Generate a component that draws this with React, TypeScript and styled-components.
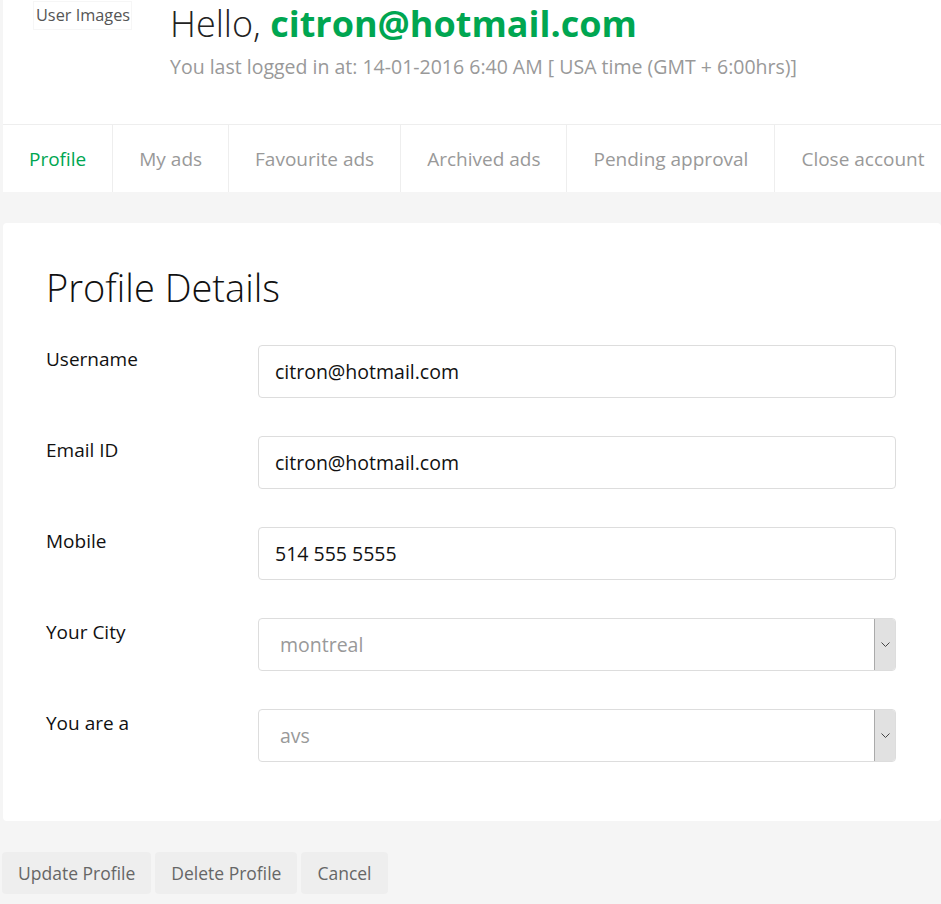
import React from 'react';
import styled, { createGlobalStyle } from 'styled-components';

const GlobalStyle = createGlobalStyle`
  html, body {
    margin: 0;
    padding: 0;
    background: #f5f5f5;
    font-family: 'Open Sans', 'Noto Sans', sans-serif;
  }
`;

const Page = styled.div`
  padding-left: 3px;
  width: 938px;
`;

const HeaderCard = styled.div`
  background: #fff;
`;

const Intro = styled.div`
  display: flex;
  height: 124px;
`;

const UserImages = styled.div`
  width: 167px;
  padding-left: 30px;
  box-sizing: border-box;
  span {
    display: inline-block;
    margin-top: 1px;
    padding: 2px 1px 3px 2px;
    border: 1px solid #f6f6f6;
    font-size: 16.3px;
    color: #555;
  }
`;

const Greeting = styled.div`
  padding-top: 2px;
`;

const Hello = styled.h1`
  margin: 0;
  font-size: 36px;
  font-weight: 300;
  color: #222;
  line-height: 44px;
  b {
    color: #00a651;
    font-weight: 700;
  }
`;

const LastLogin = styled.div`
  margin-top: 7px;
  font-size: 19.5px;
  color: #999;
`;

const Tabs = styled.div`
  display: flex;
  height: 67px;
  border-top: 1px solid #eee;
`;

const Tab = styled.div<{ $active?: boolean }>`
  display: flex;
  align-items: center;
  padding: 0 26px;
  font-size: 19px;
  color: ${(p) => (p.$active ? '#00a651' : '#999')};
  border-left: ${(p) => (p.$active ? 'none' : '1px solid #eee')};
  white-space: nowrap;
`;

const ProfileCard = styled.div`
  margin-top: 31px;
  background: #fff;
  border-radius: 4px;
  padding: 40px 45px 59px 43px;
`;

const Title = styled.h2`
  margin: 0 0 34px;
  font-size: 38px;
  font-weight: 300;
  color: #111;
  line-height: 48px;
`;

const Row = styled.div`
  display: flex;
  margin-bottom: 38px;
  &:last-child {
    margin-bottom: 0;
  }
`;

const Label = styled.label`
  width: 212px;
  padding-top: 1px;
  font-size: 19px;
  font-weight: 500;
  color: #111;
`;

const Field = styled.div<{ $muted?: boolean }>`
  flex: 1;
  height: 53px;
  box-sizing: border-box;
  border: 1px solid #ddd;
  border-radius: 4px;
  display: flex;
  align-items: center;
  padding-left: ${(p) => (p.$muted ? '21px' : '16px')};
  font-size: 19.5px;
  color: ${(p) => (p.$muted ? '#999' : '#111')};
  overflow: hidden;
`;

const Arrow = styled.div`
  margin-left: auto;
  align-self: stretch;
  width: 20px;
  background: #e1e1e1;
  border-left: 1px solid #aaa;
  display: flex;
  align-items: center;
  justify-content: center;
`;

const Actions = styled.div`
  display: flex;
  gap: 4px;
  margin-top: 31px;
  margin-left: -1px;
`;

const Button = styled.button`
  height: 42px;
  padding: 0 16px;
  border: none;
  border-radius: 4px;
  background: #eee;
  color: #666;
  font-family: inherit;
  font-size: 17.5px;
`;

const Chevron = () => (
  <svg width="9" height="6" viewBox="0 0 9 6">
    <path d="M0.5 0.5 L4.5 4.5 L8.5 0.5" fill="none" stroke="#444" strokeWidth="1" />
  </svg>
);

const tabs = ['Profile', 'My ads', 'Favourite ads', 'Archived ads', 'Pending approval', 'Close account'];

const fields = [
  { label: 'Username', value: 'citron@hotmail.com' },
  { label: 'Email ID', value: 'citron@hotmail.com' },
  { label: 'Mobile', value: '514 555 5555' },
  { label: 'Your City', value: 'montreal', select: true },
  { label: 'You are a', value: 'avs', select: true },
];

export default function App() {
  return (
    <Page>
      <GlobalStyle />
      <HeaderCard>
        <Intro>
          <UserImages>
            <span>User Images</span>
          </UserImages>
          <Greeting>
            <Hello>
              Hello, <b>citron@hotmail.com</b>
            </Hello>
            <LastLogin>You last logged in at: 14-01-2016 6:40 AM [ USA time (GMT + 6:00hrs)]</LastLogin>
          </Greeting>
        </Intro>
        <Tabs>
          {tabs.map((t, i) => (
            <Tab key={t} $active={i === 0}>
              {t}
            </Tab>
          ))}
        </Tabs>
      </HeaderCard>
      <ProfileCard>
        <Title>Profile Details</Title>
        {fields.map((f) => (
          <Row key={f.label}>
            <Label>{f.label}</Label>
            <Field $muted={f.select}>
              {f.value}
              {f.select && (
                <Arrow>
                  <Chevron />
                </Arrow>
              )}
            </Field>
          </Row>
        ))}
      </ProfileCard>
      <Actions>
        <Button>Update Profile</Button>
        <Button>Delete Profile</Button>
        <Button>Cancel</Button>
      </Actions>
    </Page>
  );
}
